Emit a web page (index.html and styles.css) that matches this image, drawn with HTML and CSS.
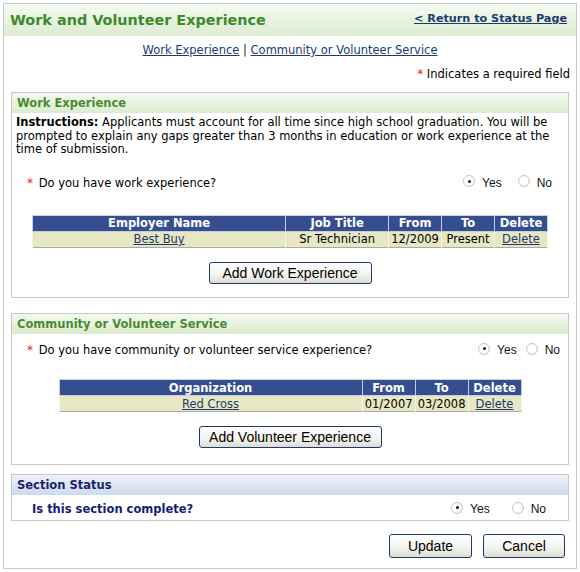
FILE: index.html
```html
<!DOCTYPE html>
<html>
<head>
<meta charset="utf-8">
<link rel="stylesheet" href="styles.css">
</head>
<body>
<div class="page">
  <div class="page-head">
    <h1 class="title">Work and Volunteer Experience</h1>
    <a class="return" href="#">&lt; Return to Status Page</a>
  </div>
  <div class="nav"><a href="#">Work Experience</a> <span class="sep">|</span> <a href="#">Community or Volunteer Service</a></div>
  <div class="required"><span class="star">*</span> Indicates a required field</div>

  <div class="section sec-work">
    <div class="sec-head green">Work Experience</div>
    <p class="instr"><b>Instructions:</b> Applicants must account for all time since high school graduation. You will be prompted to explain any gaps greater than 3 months in education or work experience at the time of submission.</p>
    <div class="q q-work">
      <div class="q-label"><span class="star">*</span> Do you have work experience?</div>
      <div class="radios">
        <span class="radio on"></span><span class="rl">Yes</span>
        <span class="radio"></span><span class="rl">No</span>
      </div>
    </div>
    <table class="grid grid-work">
      <tr><th class="c-emp">Employer Name</th><th class="c-job">Job Title</th><th class="c-d">From</th><th class="c-d">To</th><th class="c-d">Delete</th></tr>
      <tr><td><a href="#">Best Buy</a></td><td>Sr Technician</td><td>12/2009</td><td>Present</td><td><a href="#">Delete</a></td></tr>
    </table>
    <div class="btn-row"><button class="btn btn-work">Add Work Experience</button></div>
  </div>

  <div class="section sec-vol">
    <div class="sec-head green">Community or Volunteer Service</div>
    <div class="q q-vol">
      <div class="q-label"><span class="star">*</span> Do you have community or volunteer service experience?</div>
      <div class="radios">
        <span class="radio on"></span><span class="rl">Yes</span>
        <span class="radio"></span><span class="rl">No</span>
      </div>
    </div>
    <table class="grid grid-vol">
      <tr><th class="c-org">Organization</th><th class="c-d">From</th><th class="c-d">To</th><th class="c-d">Delete</th></tr>
      <tr><td><a href="#">Red Cross</a></td><td class="r">01/2007</td><td class="r">03/2008</td><td><a href="#">Delete</a></td></tr>
    </table>
    <div class="btn-row"><button class="btn btn-vol">Add Volunteer Experience</button></div>
  </div>

  <div class="section sec-status">
    <div class="sec-head blue">Section Status</div>
    <div class="q q-status">
      <div class="q-label strong">Is this section complete?</div>
      <div class="radios">
        <span class="radio on"></span><span class="rl">Yes</span>
        <span class="radio"></span><span class="rl">No</span>
      </div>
    </div>
  </div>

  <div class="actions">
    <button class="btn btn-update">Update</button>
    <button class="btn btn-cancel">Cancel</button>
  </div>
</div>
</body>
</html>
```

FILE: styles.css
```css
html, body { margin: 0; padding: 0; background: #fff; }
body { padding: 3px; font-family: "DejaVu Sans", Verdana, sans-serif; font-size: 11.5px; color: #000; }
a { color: #1c3a6e; }

.page {
  border: 1px solid #c8c8c8;
  width: 572px;
  height: 564px;
  box-sizing: content-box;
}

.page-head {
  height: 32px;
  display: flex;
  align-items: center;
  justify-content: space-between;
  padding: 0 9px 0 6px;
  background: linear-gradient(#f5faf1, #dcecd0);
}
.title { margin: 0; font-size: 14.4px; font-weight: bold; color: #3d8a2b; }
.return { font-weight: bold; font-size: 11.2px; color: #1c3a6e; margin-top: -3px; }

.nav { text-align: center; margin-top: 7px; height: 14px; line-height: 14px; }
.nav .sep { color: #222; }

.required { text-align: right; padding-right: 6px; margin-top: 10px; height: 14px; line-height: 14px; }
.star { color: #e0202a; font-size: 12px; }

.section {
  border: 1px solid #c8c8c8;
  margin: 0 7px;
}
.sec-work { margin-top: 11px; height: 204px; }
.sec-vol { margin-top: 15px; height: 150px; }
.sec-status { margin-top: 9px; height: 45px; }

.sec-head {
  height: 20px;
  line-height: 20px;
  padding-left: 5px;
  font-weight: bold;
}
.sec-head.green { background: linear-gradient(#f3f9ee, #dbecce); color: #4b8a34; }
.sec-head.blue { background: linear-gradient(#eef2f9, #cbdaee); color: #1a1f6e; }

.instr { margin: 3px 4px 0 4px; line-height: 13.5px; }

.q { display: flex; justify-content: space-between; align-items: center; height: 16px; }
.q-work { margin-top: 18px; padding-left: 15px; padding-right: 16px; }
.q-vol { margin-top: 8px; padding-left: 15px; padding-right: 8px; }
.q-status { margin-top: 6px; padding-left: 20px; padding-right: 22px; }
.q-label .star { margin-right: 2px; }
.q-label.strong { font-weight: bold; color: #1a1a72; }

.radios { display: flex; align-items: center; }
.radio {
  width: 12px; height: 12px;
  border-radius: 50%;
  border: 1px solid #c4c4c4;
  background: radial-gradient(circle at 40% 40%, #fff 0, #fff 50%, #e6e6e0 100%);
  box-sizing: border-box;
  position: relative;
  margin-top: -3px;
}
.radio.on::after {
  content: "";
  position: absolute;
  left: 3.5px; top: 3.5px;
  width: 3px; height: 3px;
  border-radius: 50%;
  background: #111;
}
.rl { margin-left: 7px; font-family: "Liberation Sans", Arial, sans-serif; font-size: 12px; color: #111; }
.q-work .rl:nth-child(2) { margin-right: 16px; }
.q-vol .rl:nth-child(2) { margin-right: 9px; }
.q-status .rl:nth-child(2) { margin-right: 22px; }

.grid {
  border-collapse: collapse;
  margin: 0 auto;
  border: 1px solid #a8a8a8;
  border-top-color: #d0d0d0;
}
.grid-work { width: 516px; margin-top: 24px; }
.grid-vol { width: 463px; margin-top: 21px; }
.grid th {
  background: #354e8f;
  color: #fff;
  font-weight: bold;
  height: 15px;
  padding: 0;
  border: 1px solid #c8cede;
  border-top: none;
}
.grid td {
  background: #e7e7c3;
  height: 15px;
  padding: 0 2px;
  text-align: center;
  border-left: 1px solid #f4f4e4;
  border-right: 1px solid #f4f4e4;
  white-space: nowrap;
}
.grid td.r { text-align: right; }
.c-emp { width: 253px; }
.c-job { width: 102px; }
.c-org { width: 303px; }
.c-d { width: 52px; }

.btn-row { text-align: center; }
.sec-work .btn-row { margin-top: 14px; }
.sec-vol .btn-row { margin-top: 14px; }

.btn {
  font-family: "Liberation Sans", Arial, sans-serif;
  font-size: 14px;
  color: #000;
  height: 22px;
  padding: 0;
  border: 1px solid #1c3a6e;
  border-radius: 3px;
  background: linear-gradient(#ffffff, #f3f3ee 60%, #dcdcd2);
}
.btn-work { width: 163px; }
.btn-vol { width: 183px; }

.actions { display: flex; justify-content: flex-end; gap: 11px; padding-right: 11px; margin-top: 13px; }
.btn-update { width: 83px; height: 24px; }
.btn-cancel { width: 82px; height: 24px; }
```
